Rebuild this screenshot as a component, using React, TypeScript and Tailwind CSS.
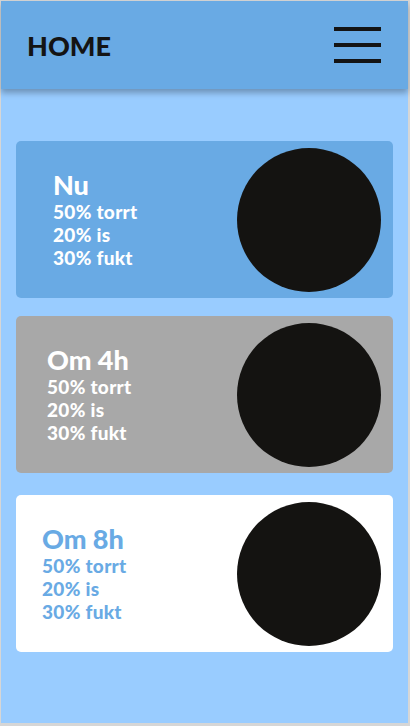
const cards = [
  { title: 'Nu', bg: 'bg-[#69aae4]', text: 'text-white', pad: 'pl-[37px]' },
  { title: 'Om 4h', bg: 'bg-[#a8a8a8]', text: 'text-white', pad: 'pl-[31px]' },
  { title: 'Om 8h', bg: 'bg-white', text: 'text-[#69aae4]', pad: 'pl-[26px]' },
]

function WeatherCard({ title, bg, text, pad }: { title: string; bg: string; text: string; pad: string }) {
  return (
    <div className={`flex h-[157px] items-center justify-between rounded-[5px] ${bg} ${pad} pr-[12px]`}>
      <div className={`flex flex-col font-black ${text}`}>
        <span className="text-[27px] leading-[30px]">{title}</span>
        <span className="text-[19px] leading-[23px] tracking-[0.3px]">50% torrt</span>
        <span className="text-[19px] leading-[23px] tracking-[0.3px]">20% is</span>
        <span className="text-[19px] leading-[23px] tracking-[0.3px]">30% fukt</span>
      </div>
      <div className="h-[144px] w-[144px] rounded-full bg-[#141311]" />
    </div>
  )
}

export default function App() {
  return (
    <div className="h-[728px] w-[410px] bg-white font-['Lato',sans-serif]">
      <div className="flex h-[726px] flex-col border-b-[3px] border-l border-r-2 border-t border-[#d6d6d6] bg-[#99ccff]">
        <header className="relative z-10 flex h-[88px] shrink-0 items-center justify-between bg-[#69aae4] pl-[26px] pr-[27px] shadow-[0_4px_6px_rgba(0,0,0,0.28)]">
          <h1 className="text-[27px] font-black leading-none text-[#141414]">HOME</h1>
          <div className="flex flex-col gap-3">
            <span className="h-1 w-[47px] bg-[#141414]" />
            <span className="h-1 w-[47px] bg-[#141414]" />
            <span className="h-1 w-[47px] bg-[#141414]" />
          </div>
        </header>
        <main className="flex flex-col px-[15px] pt-[52px]">
          <WeatherCard {...cards[0]} />
          <div className="mt-[18px]">
            <WeatherCard {...cards[1]} />
          </div>
          <div className="mt-[22px]">
            <WeatherCard {...cards[2]} />
          </div>
        </main>
      </div>
    </div>
  )
}
